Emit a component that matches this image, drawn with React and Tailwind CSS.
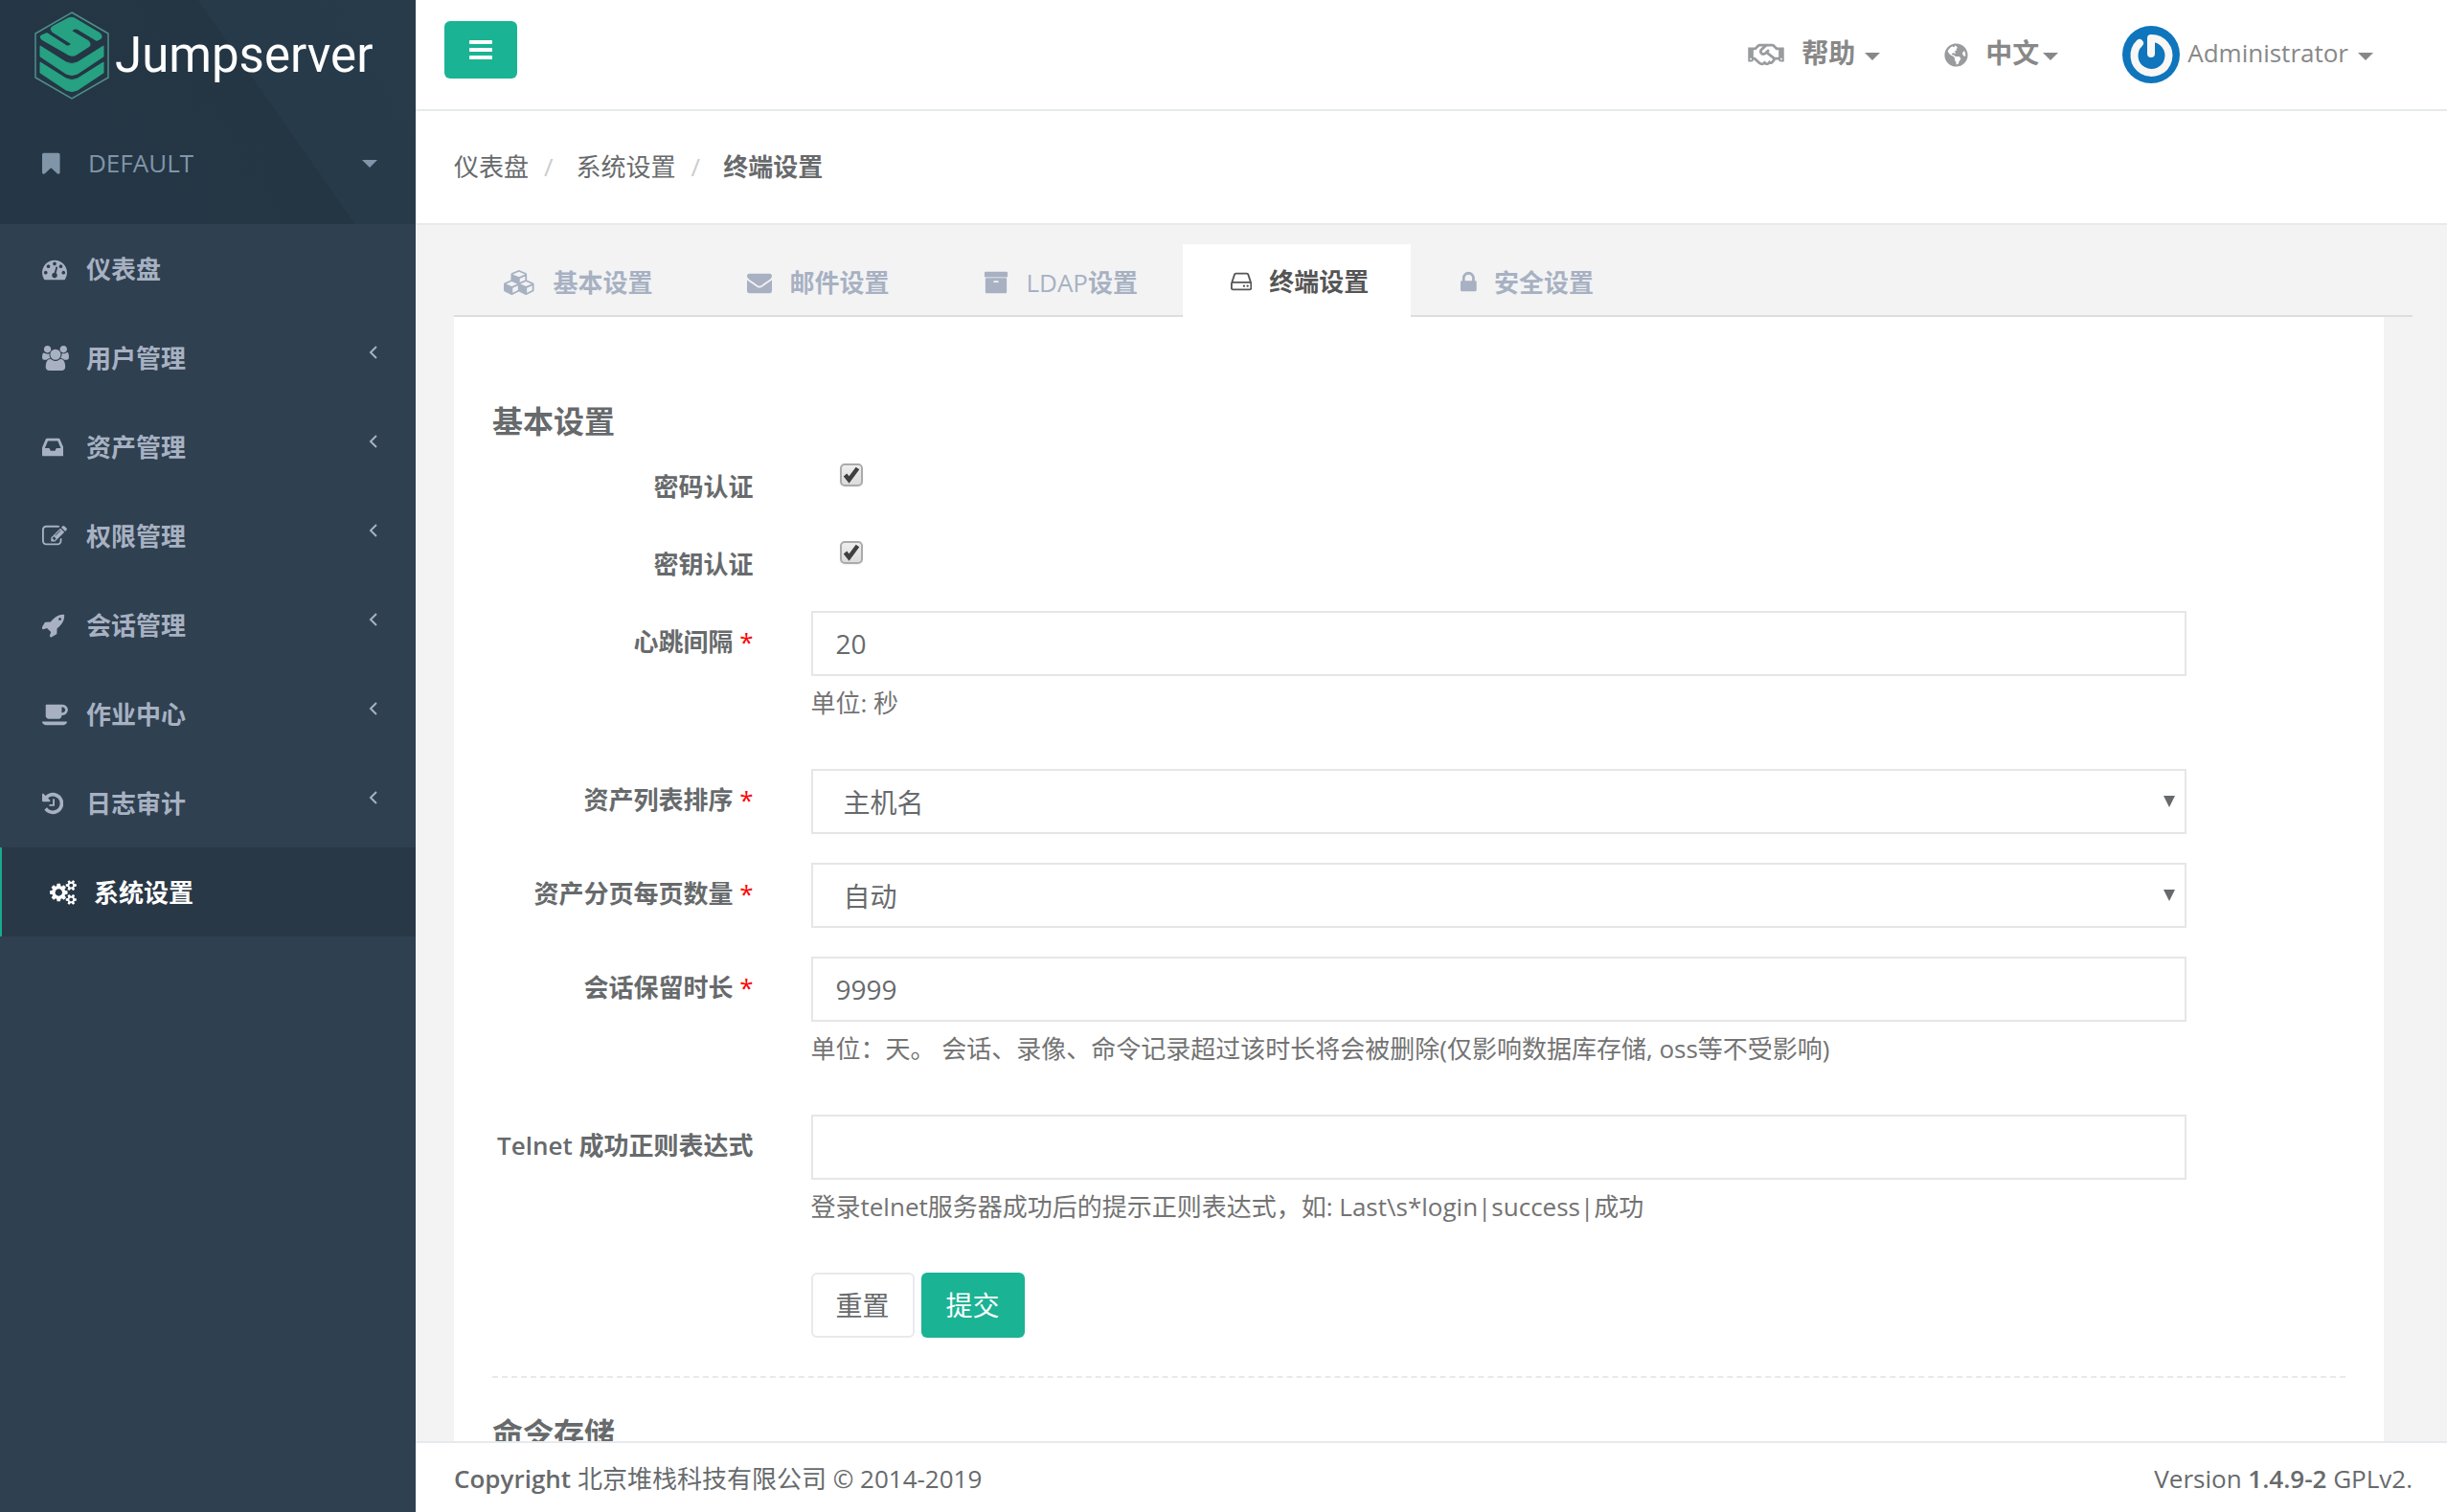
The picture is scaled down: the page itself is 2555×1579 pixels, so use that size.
import { FaGlobeAmericas, FaRegHandshake } from 'react-icons/fa';

const dot = 'q0-53-37.5-90.5t-90.5-37.5-90.5 37.5-37.5 90.5 37.5 90.5 90.5 37.5 90.5-37.5 37.5-90.5z';
const smallCog =
    'v140q0 16-149 31-12 27-30 52 51 113 51 138 0 4-4 7-122 71-124 71-8 0-46-47t-52-68q-20 2-30 2t-30-2q-14 21-52 68t-46 47q-2 0-124-71-4-3-4-7 0-25 51-138-18-25-30-52-149-15-149-31v-140q0-16 149-31 13-29 30-52-51-113-51-138 0-4 4-7 4-2 35-20t59-34 30-16q8 0 46 46.5t52 67.5q20-2 30-2t30 2q51-71 92-112l6-2q4 0 124 70 4 3 4 7 0 25-51 138 17 23 30 52 149 15 149 31z';

// box is [min x, width] on a 1792 unit em
const icons = {
    bars: {
        box: [128, 1536],
        d: 'M1664 1344v128q0 26-19 45t-45 19h-1408q-26 0-45-19t-19-45v-128q0-26 19-45t45-19h1408q26 0 45 19t19 45zM1664 832v128q0 26-19 45t-45 19h-1408q-26 0-45-19t-19-45v-128q0-26 19-45t45-19h1408q26 0 45 19t19 45zM1664 320v128q0 26-19 45t-45 19h-1408q-26 0-45-19t-19-45v-128q0-26 19-45t45-19h1408q26 0 45 19t19 45z',
    },
    bookmark: {
        box: [256, 1280],
        d: 'M1420 128q23 0 44 9 33 13 52.5 41t19.5 62v1289q0 34-19.5 62t-52.5 41q-19 8-44 8-48 0-83-32l-441-424-441 424q-36 33-83 33-23 0-44-9-33-13-52.5-41t-19.5-62v-1289q0-34 19.5-62t52.5-41q21-9 44-9h1048z',
    },
    dashboard: {
        box: [0, 1792],
        d:
            'M384 1152' + dot + 'M576 704' + dot +
            'M1004 1185l101-382q6-26-7.5-48.5t-38.5-29.5-48 6.5-30 39.5l-101 382q-60 5-107 43.5t-63 98.5q-20 77 20 146t117 89 146-20 89-117q16-60-6-117t-72-91z' +
            'M1664 1152' + dot + 'M1024 512' + dot + 'M1472 704' + dot +
            'M1792 1152q0 261-141 483-19 29-54 29h-1402q-35 0-54-29-141-221-141-483 0-182 71-348t191-286 286-191 348-71 348 71 286 191 191 286 71 348z',
    },
    users: {
        box: [-64, 1920],
        d: 'M529 896q-162 5-265 128h-134q-82 0-138-40.5t-56-118.5q0-353 124-353 6 0 43.5 21t97.5 42.5 119 21.5q67 0 133-23-5 37-5 66 0 159 90 283zm1071 637q0 120-73 189.5t-194 69.5h-874q-121 0-194-69.5t-73-189.5q0-53 3.5-103.5t14-109 26.5-108.5 43-97.5 62-81 85.5-53.5 111.5-20q10 0 43 21.5t73 48 107 48 135 21.5 135-21.5 107-48 73-48 43-21.5q61 0 111.5 20t85.5 53.5 62 81 43 97.5 26.5 108.5 14 109 3.5 103.5zm-1024-1277q0 106-75 181t-181 75-181-75-75-181 75-181 181-75 181 75 75 181zm704 384q0 159-112.5 271.5t-271.5 112.5-271.5-112.5-112.5-271.5 112.5-271.5 271.5-112.5 271.5 112.5 112.5 271.5zm576 225q0 78-56 118.5t-138 40.5h-134q-103-123-265-128 90-124 90-283 0-29-5-66 66 23 133 23 59 0 119-21.5t97.5-42.5 43.5-21q124 0 124 353zm-128-609q0 106-75 181t-181 75-181-75-75-181 75-181 181-75 181 75 75 181z',
    },
    inbox: {
        box: [128, 1536],
        d: 'M1151 960h316q-1-3-2.5-8.5t-2.5-7.5l-212-496h-708l-212 496q-1 3-2.5 8.5t-2.5 7.5h316l95 192h320zm513 30v482q0 26-19 45t-45 19h-1408q-26 0-45-19t-19-45v-482q0-62 25-123l238-552q10-25 36.5-42t52.5-17h832q26 0 52.5 17t36.5 42l238 552q25 61 25 123z',
    },
    edit: {
        box: [0, 1792],
        d: 'M888 1184l116-116-152-152-116 116v56h96v96h56zm440-720q-16-16-33 1l-350 350q-17 17-1 33t33-1l350-350q17-17 1-33zm80 594v190q0 119-84.5 203.5t-203.5 84.5h-832q-119 0-203.5-84.5t-84.5-203.5v-832q0-119 84.5-203.5t203.5-84.5h832q63 0 117 25 15 7 18 23 3 17-9 29l-49 49q-14 14-32 8-23-6-45-6h-832q-66 0-113 47t-47 113v832q0 66 47 113t113 47h832q66 0 113-47t47-113v-126q0-13 9-22l64-64q15-15 35-7t20 29zm-96-738l288 288-672 672h-288v-288zm444 132l-92 92-288-288 92-92q28-28 68-28t68 28l152 152q28 28 28 68t-28 68z',
    },
    rocket: {
        box: [64, 1664],
        d: 'M1440 448q0-40-28-68t-68-28-68 28-28 68 28 68 68 28 68-28 28-68zm224-288q0 249-75.5 430.5t-253.5 360.5q-81 80-195 176l-20 379q-2 16-16 26l-384 224q-7 4-16 4-12 0-23-9l-64-64q-13-14-8-32l85-276-281-281-276 85q-3 1-9 1-14 0-23-9l-64-64q-17-19-5-39l224-384q10-14 26-16l379-20q96-114 176-195 188-187 358-258t431-71q14 0 24 9.5t10 22.5z',
    },
    coffee: {
        box: [0, 1920],
        d: 'M1664 576q0-80-56-136t-136-56h-64v384h64q80 0 136-56t56-136zM0 1408h1792q0 106-75 181t-181 75h-1280q-106 0-181-75t-75-181zM1856 576q0 159-112.5 271.5t-271.5 112.5h-64v32q0 92-66 158t-158 66h-704q-92 0-158-66t-66-158v-736q0-26 19-45t45-19h1152q159 0 271.5 112.5t112.5 271.5z',
    },
    history: {
        box: [128, 1536],
        d: 'M1664 896q0 156-61 298t-164 245-245 164-298 61q-172 0-327-72.5t-264-204.5q-7-10-6.5-22.5t8.5-20.5l137-138q10-9 25-9 16 2 23 12 73 95 179 147t225 52q104 0 198.5-40.5t163.5-109.5 109.5-163.5 40.5-198.5-40.5-198.5-109.5-163.5-163.5-109.5-198.5-40.5q-98 0-188 35.5t-160 101.5l137 138q31 30 14 69-17 40-59 40h-448q-26 0-45-19t-19-45v-448q0-42 40-59 39-17 69 14l130 129q107-101 244.5-156.5t284.5-55.5q156 0 298 61t245 164 164 245 61 298zm-640-288v448q0 14-9 23t-23 9h-320q-14 0-23-9t-9-23v-64q0-14 9-23t23-9h224v-352q0-14 9-23t23-9h64q14 0 23 9t9 23z',
    },
    cogs: {
        box: [-64, 1920],
        d:
            'M832 896q0-106-75-181t-181-75-181 75-75 181 75 181 181 75 181-75 75-181zm768 512q0-52-38-90t-90-38-90 38-38 90q0 53 37.5 90.5t90.5 37.5 90.5-37.5 37.5-90.5zm0-1024q0-52-38-90t-90-38-90 38-38 90q0 53 37.5 90.5t90.5 37.5 90.5-37.5 37.5-90.5zm-384 421v185q0 10-7 19.5t-16 10.5l-155 24q-11 35-32 76 34 48 90 115 7 11 7 20 0 12-7 19-23 30-82.5 89.5t-78.5 59.5q-11 0-21-7l-115-90q-37 19-77 31-11 108-23 155-7 24-30 24h-186q-11 0-20-7.5t-10-17.5l-23-153q-34-10-75-31l-118 89q-7 7-20 7-11 0-21-8-144-133-144-160 0-9 7-19 10-14 41-53t47-61q-23-44-35-82l-152-24q-10-1-17-9.5t-7-19.5v-185q0-10 7-19.5t16-10.5l155-24q11-35 32-76-34-48-90-115-7-11-7-20 0-12 7-20 22-30 82-89t79-59q11 0 21 7l115 90q34-18 77-32 11-108 23-154 7-24 30-24h186q11 0 20 7.5t10 17.5l23 153q34 10 75 31l118-89q8-7 20-7 11 0 21 8 144 133 144 160 0 8-7 19-12 16-42 54t-45 60q23 48 34 82l152 23q10 2 17 10.5t7 19.5z' +
            'M1856 1338' + smallCog + 'M1856 314' + smallCog,
    },
    cubes: {
        box: [0, 2304],
        d: 'M640 1632l384-192v-314l-384 164v342zm-64-454l404-173-404-173-404 173zm1088 454l384-192v-314l-384 164v342zm-64-454l404-173-404-173-404 173zm-448-293l384-165v-266l-384 164v267zm-64-379l441-189-441-189-441 189zm1088 518v416q0 36-19 67t-52 47l-448 224q-25 14-57 14t-57-14l-448-224q-4-2-7-4-2 2-7 4l-448 224q-25 14-57 14t-57-14l-448-224q-33-16-52-47t-19-67v-416q0-38 21.5-70t56.5-48l434-186v-400q0-38 21.5-70t56.5-48l448-192q23-10 50-10t50 10l448 192q35 16 56.5 48t21.5 70v400l434 186q36 16 57 48t21 70z',
    },
    envelope: {
        box: [0, 1792],
        d: 'M1792 710v794q0 66-47 113t-113 47h-1472q-66 0-113-47t-47-113v-794q44 49 101 87 362 246 497 345 57 42 92.5 65.5t94.5 48 110 24.5h2q51 0 110-24.5t94.5-48 92.5-65.5q170-123 498-345 57-39 100-87zm0-294q0 79-49 151t-122 123q-376 261-468 325-10 7-42.5 31t-54 38.5-52 32.5-57.5 27-50 9h-2q-23 0-50-9t-57.5-27-52-32.5-54-38.5-42.5-31q-91-64-262-182.5t-205-142.5q-62-42-117-115.5t-55-136.5q0-78 41.5-130t118.5-52h1472q65 0 112.5 47t47.5 113z',
    },
    archive: {
        box: [0, 1792],
        d: 'M1088 832q0-26-19-45t-45-19h-256q-26 0-45 19t-19 45 19 45 45 19h256q26 0 45-19t19-45zm576-192v960q0 26-19 45t-45 19h-1408q-26 0-45-19t-19-45v-960q0-26 19-45t45-19h1408q26 0 45 19t19 45zm64-448v256q0 26-19 45t-45 19h-1536q-26 0-45-19t-19-45v-256q0-26 19-45t45-19h1536q26 0 45 19t19 45z',
    },
    hdd: {
        box: [128, 1536],
        d: 'M1168 1216q0 33-23.5 56.5t-56.5 23.5-56.5-23.5-23.5-56.5 23.5-56.5 56.5-23.5 56.5 23.5 23.5 56.5zm256 0q0 33-23.5 56.5t-56.5 23.5-56.5-23.5-23.5-56.5 23.5-56.5 56.5-23.5 56.5 23.5 23.5 56.5zm112 160v-320q0-13-9.5-22.5t-22.5-9.5h-1216q-13 0-22.5 9.5t-9.5 22.5v320q0 13 9.5 22.5t22.5 9.5h1216q13 0 22.5-9.5t9.5-22.5zm-1230-480h1180l-157-482q-4-13-16-21.5t-26-8.5h-782q-14 0-26 8.5t-16 21.5zm1358 160v320q0 66-47 113t-113 47h-1216q-66 0-113-47t-47-113v-320q0-25 16-75l197-606q17-53 63-86t101-33h782q55 0 101 33t63 86l197 606q16 50 16 75z',
    },
    lock: {
        box: [320, 1152],
        d: 'M640 768h512v-192q0-106-75-181t-181-75-181 75-75 181v192zm832 96v576q0 40-28 68t-68 28h-960q-40 0-68-28t-28-68v-576q0-40 28-68t68-28h32v-192q0-184 132-316t316-132 316 132 132 316v192h32q40 0 68 28t28 68z',
    },
};

const Icon = ({ name, className = 'h-[26px]' }) => {
    const { box, d } = icons[name];
    return (
        <svg viewBox={`${box[0]} 0 ${box[1]} 1792`} className={className} fill="currentColor" fillRule="evenodd" aria-hidden="true">
            <path d={d} />
        </svg>
    );
};

const Caret = ({ className = 'h-2 w-4' }) => (
    <svg viewBox="0 0 16 8" className={className} fill="currentColor" preserveAspectRatio="none" aria-hidden="true">
        <path d="M0 0h16l-8 8z" />
    </svg>
);

const Logo = () => (
    <svg viewBox="0 0 78 92" className="h-[92px] w-[78px]" aria-hidden="true">
        <path d="M39 1l38 22v46L39 91 1 69V23z" fill="none" stroke="#4f8f8a" strokeWidth="1.5" />
        <g fill="#26a283" stroke="#26a283" strokeLinejoin="round">
            <path d="M19 16l17-9q3-1 5 0l27 16q3 3 1 5l-4 2-20-12q-6-1-6 3l17 10q3 3 1 5L43 45q-3 2-7 0L8 29q-3-3 0-4l5-2 20 13q6 1 5-3L19 21q-3-3 0-5z" strokeWidth="1.5" />
            <path d="M6 36l27 17q6 3 12 0l27-17v11L45 65q-6 3-12 0L6 47z" />
            <path d="M6 53l27 17q6 3 12 0l27-17v11L45 82q-6 3-12 0L6 64z" />
        </g>
    </svg>
);

const Avatar = () => (
    <svg viewBox="0 0 60 60" className="size-[60px]" aria-hidden="true">
        <circle cx="30" cy="30" r="30" fill="#0f75bc" />
        <path d="M18 18a18 18 0 1 0 12-5v16" fill="none" stroke="#f7f7f5" strokeWidth="8" strokeLinecap="round" strokeLinejoin="round" />
    </svg>
);

const menu = [
    { icon: 'dashboard', label: '仪表盘' },
    { icon: 'users', label: '用户管理', children: true },
    { icon: 'inbox', label: '资产管理', children: true },
    { icon: 'edit', label: '权限管理', children: true },
    { icon: 'rocket', label: '会话管理', children: true },
    { icon: 'coffee', label: '作业中心', children: true },
    { icon: 'history', label: '日志审计', children: true },
    { icon: 'cogs', label: '系统设置', active: true },
];

const Sidebar = () => (
    <aside className="w-[434px] shrink-0 bg-[#2f4050] text-[#a7b1c2]">
        <div className="h-[234px] bg-[#253645] bg-[linear-gradient(55deg,#253746_0%,#243544_62%,#273a49_62%,#283b4a_100%)]">
            <a href="#" className="flex h-[116px] items-center pl-9 text-white">
                <Logo />
                <span className="pl-1.5 font-[Roboto] text-[51px] leading-[60px]">Jumpserver</span>
            </a>
            <button type="button" className="flex w-full items-center px-10 pt-9 text-[#8095a8]">
                <span className="w-[52px] pl-1"><Icon name="bookmark" /></span>
                <span>DEFAULT</span>
                <Caret className="ml-auto h-2 w-4" />
            </button>
        </div>
        <nav>
            {menu.map((item) => (
                <a
                    key={item.label}
                    href="#"
                    className={
                        item.active
                            ? 'flex h-[93px] items-center border-l-2 border-[#19aa8d] bg-[#293846] pl-[50px] font-semibold text-white'
                            : 'flex h-[93px] items-center pl-11 pr-10 font-semibold'
                    }
                >
                    <span className="w-[46px]"><Icon name={item.icon} /></span>
                    <span className="pt-px">{item.label}</span>
                    {item.children && (
                        <svg viewBox="0 0 9 14" className="mb-3 ml-auto h-3.5 w-[9px]" fill="none" stroke="currentColor" strokeWidth="2" aria-hidden="true">
                            <path d="M8 1L2 7l6 6" />
                        </svg>
                    )}
                </a>
            ))}
        </nav>
    </aside>
);

const TopBar = () => (
    <header className="flex h-[116px] items-center justify-between border-b-2 border-[#e7eaec] bg-white pl-[30px] pr-[77px] text-[#888]">
        <button type="button" aria-label="菜单" className="mb-2.5 flex h-[60px] w-[76px] items-center justify-center rounded-md bg-[#1ab394] text-white">
            <Icon name="bars" className="h-7" />
        </button>
        <div className="flex items-center text-[28px] font-semibold">
            <a href="#" className="flex items-center">
                <FaRegHandshake className="mr-[18px] h-[30px] w-[38px] text-[#999c9e]" />
                <span className="mb-1">帮助</span>
                <Caret className="ml-2.5 mt-1 h-2 w-4" />
            </a>
            <a href="#" className="ml-[67px] flex items-center">
                <FaGlobeAmericas className="mr-[18px] size-[25px] text-[#999c9e]" />
                <span className="mb-1">中文</span>
                <Caret className="ml-1 mt-1 h-2 w-4" />
            </a>
            <a href="#" className="ml-[67px] flex items-center text-[26px] font-normal">
                <Avatar />
                <span className="mb-1 ml-2">Administrator</span>
                <Caret className="ml-2.5 mt-1 h-2 w-4" />
            </a>
        </div>
    </header>
);

const Breadcrumb = () => (
    <ol className="flex h-[119px] items-center border-b-2 border-[#e7eaec] bg-white pl-10">
        <li><a href="#">仪表盘</a></li>
        <li className="pl-4 pr-6 text-[#ccc]">/</li>
        <li><a href="#">系统设置</a></li>
        <li className="pl-4 pr-6 text-[#ccc]">/</li>
        <li className="font-semibold">终端设置</li>
    </ol>
);

const tabs = [
    { icon: 'cubes', label: '基本设置' },
    { icon: 'envelope', label: '邮件设置' },
    { icon: 'archive', label: 'LDAP设置' },
    { icon: 'hdd', label: '终端设置', active: true },
    { icon: 'lock', label: '安全设置' },
];

const Tabs = () => (
    <nav className="flex border-b-2 border-[#dddddd] pt-5">
        {tabs.map((tab) => (
            <a
                key={tab.label}
                href="#"
                className={
                    tab.active
                        ? '-mb-0.5 flex h-[76px] items-center gap-[18px] bg-white pl-[50px] pr-11 pt-0.5 font-semibold text-[#555]'
                        : 'flex h-[74px] items-center gap-[18px] pl-[52px] pr-[47px] pt-1.5 font-semibold text-[#a7b1c2]'
                }
            >
                <Icon name={tab.icon} />
                {tab.label === 'LDAP设置' ? <span><span className="font-normal">LDAP</span>设置</span> : tab.label}
            </a>
        ))}
    </nav>
);

const Field = ({ id, label, required, help, children }) => (
    <div className="-mx-[30px] mb-[30px] flex">
        <label htmlFor={id} className="w-1/6 px-[30px] pt-3.5 text-right font-semibold whitespace-nowrap">
            {label}
            {required && <span className="font-normal text-[#f00]"> *</span>}
        </label>
        <div className="w-3/4 px-[30px]">
            {children}
            {help && <p className="mb-5 mt-2.5 text-[#737373]">{help}</p>}
        </div>
    </div>
);

const Checkbox = ({ id }) => (
    <div className="grid w-fit pl-[30px] pt-2">
        <input
            id={id}
            type="checkbox"
            defaultChecked
            className="peer col-start-1 row-start-1 size-6 appearance-none rounded-[5px] border-2 border-[#ababab] bg-linear-to-b from-[#eee] to-[#dcdcdc] shadow-xs"
        />
        <svg viewBox="0 0 24 24" className="pointer-events-none invisible col-start-1 row-start-1 size-6 peer-checked:visible" aria-hidden="true">
            <path d="M5.500 12l4 5 9-12" fill="none" stroke="#404040" strokeWidth="4.500" />
        </svg>
    </div>
);

const TextInput = ({ id, value = '' }) => (
    <input id={id} type="text" defaultValue={value} className="block h-[68px] w-full border-2 border-[#e5e6e7] bg-white px-6 text-[28px]" />
);

const Select = ({ id, options }) => (
    <div className="grid items-center">
        <select id={id} className="col-start-1 row-start-1 h-[68px] w-full appearance-none border-2 border-[#e5e6e7] bg-white px-8 pt-0.5 text-[28px]">
            {options.map((option) => (
                <option key={option}>{option}</option>
            ))}
        </select>
        <Caret className="pointer-events-none col-start-1 row-start-1 mr-3 h-3 w-3 justify-self-end" />
    </div>
);

const TerminalForm = () => (
    <form className="mr-[30px] bg-white px-10 pb-20 pt-[91px]">
        <h3 className="mb-[18px] text-[32px] leading-9 font-semibold">基本设置</h3>
        <Field id="password-auth" label="密码认证">
            <Checkbox id="password-auth" />
        </Field>
        <Field id="key-auth" label="密钥认证">
            <Checkbox id="key-auth" />
        </Field>
        <Field id="heartbeat" label="心跳间隔" required help="单位: 秒">
            <TextInput id="heartbeat" value="20" />
        </Field>
        <Field id="sort-by" label="资产列表排序" required>
            <Select id="sort-by" options={['主机名', 'IP']} />
        </Field>
        <Field id="page-size" label="资产分页每页数量" required>
            <Select id="page-size" options={['自动', '10', '25', '50']} />
        </Field>
        <Field
            id="keep-days"
            label="会话保留时长"
            required
            help="单位：天。 会话、录像、命令记录超过该时长将会被删除(仅影响数据库存储, oss等不受影响)"
        >
            <TextInput id="keep-days" value="9999" />
        </Field>
        <Field id="telnet-regex" label="Telnet 成功正则表达式" help="登录telnet服务器成功后的提示正则表达式，如: Last\s*login|success|成功">
            <TextInput id="telnet-regex" />
        </Field>
        <div className="-mx-[30px] flex">
            <div className="ml-[16.6667%] flex gap-[7px] px-[30px] text-[28px]">
                <button type="reset" className="h-[68px] w-[108px] rounded-md border-2 border-[#e7eaec] bg-white">重置</button>
                <button type="submit" className="h-[68px] w-[108px] rounded-md bg-[#1ab394] text-white">提交</button>
            </div>
        </div>
        <hr className="my-10 border-t-2 border-dashed border-[#e7eaec]" />
        <h3 className="text-[32px] leading-9 font-semibold">命令存储</h3>
    </form>
);

const Footer = () => (
    <footer className="flex h-[74px] shrink-0 items-center justify-between border-t-2 border-[#e7eaec] bg-white pl-10 pr-9 pt-0.5">
        <div><strong className="font-semibold">Copyright</strong> 北京堆栈科技有限公司 © 2014-2019</div>
        <div>Version <strong className="font-semibold">1.4.9-2</strong> GPLv2.</div>
    </footer>
);

export default function App() {
    return (
        <div className="flex h-screen bg-[#f3f3f4] font-['Open_Sans','Noto_Sans_CJK_SC',sans-serif] text-[26px] leading-[37px] text-[#676a6c]">
            <Sidebar />
            <div className="flex min-w-0 flex-1 flex-col">
                <main className="min-h-0 flex-1 overflow-y-auto [scrollbar-width:none]">
                    <TopBar />
                    <Breadcrumb />
                    <div className="pl-10 pr-9">
                        <Tabs />
                        <TerminalForm />
                    </div>
                </main>
                <Footer />
            </div>
        </div>
    );
}
